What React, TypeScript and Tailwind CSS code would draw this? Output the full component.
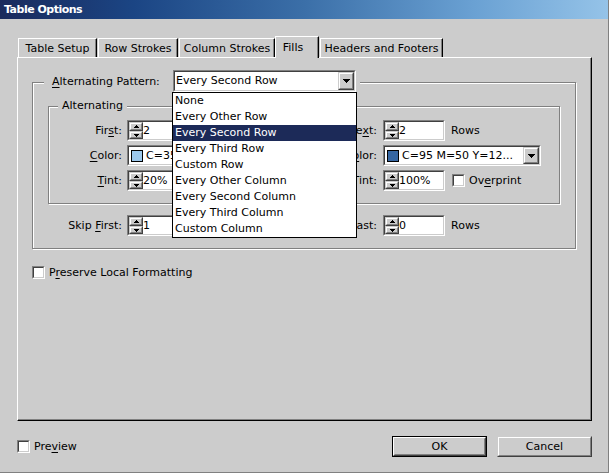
import React from "react";

type C = { className?: string; innerClass?: string; children?: React.ReactNode };

const Sunken = ({ className = "", innerClass = "", children }: C) => (
  <div className={`border border-t-[#808080] border-l-[#808080] border-b-white border-r-white ${className}`}>
    <div className={`h-full w-full border border-t-[#404040] border-l-[#404040] border-b-[#cccccc] border-r-[#cccccc] bg-white ${innerClass}`}>
      {children}
    </div>
  </div>
);

const Raised = ({ className = "", children }: C) => (
  <div className={`border border-t-[#cccccc] border-l-[#cccccc] border-b-[#404040] border-r-[#404040] bg-[#cccccc] ${className}`}>
    <div className="h-full w-full border border-t-white border-l-white border-b-[#808080] border-r-[#808080] flex items-center justify-center">
      {children}
    </div>
  </div>
);

const DownArrow = () => (
  <svg width="7" height="4" shapeRendering="crispEdges">
    <rect x="0" y="0" width="7" height="1" fill="#000" />
    <rect x="1" y="1" width="5" height="1" fill="#000" />
    <rect x="2" y="2" width="3" height="1" fill="#000" />
    <rect x="3" y="3" width="1" height="1" fill="#000" />
  </svg>
);

const SpinUp = () => (
  <svg width="5" height="3" shapeRendering="crispEdges">
    <rect x="2" y="0" width="1" height="1" fill="#000" />
    <rect x="1" y="1" width="3" height="1" fill="#000" />
    <rect x="0" y="2" width="5" height="1" fill="#000" />
  </svg>
);

const SpinDown = () => (
  <svg width="5" height="3" shapeRendering="crispEdges">
    <rect x="0" y="0" width="5" height="1" fill="#000" />
    <rect x="1" y="1" width="3" height="1" fill="#000" />
    <rect x="2" y="2" width="1" height="1" fill="#000" />
  </svg>
);

const U = ({ children }: { children: React.ReactNode }) => (
  <span className="underline decoration-1 underline-offset-2">{children}</span>
);

const Check = () => <Sunken className="w-[13px] h-[13px] shrink-0" />;

const SpinField = ({ value }: { value: string }) => (
  <Sunken className="w-[62px] h-[21px] shrink-0" innerClass="flex">
    <div className="flex flex-col w-[14px]">
      <Raised className="h-[9px] w-[14px]">
        <SpinUp />
      </Raised>
      <Raised className="h-[8px] w-[14px]">
        <SpinDown />
      </Raised>
    </div>
    <div className="leading-[17px]">{value}</div>
  </Sunken>
);

const ColorCombo = ({ swatch, text }: { swatch: string; text: string }) => (
  <Sunken className="w-[158px] h-[21px] shrink-0" innerClass="flex items-center">
    <div className={`ml-[2px] w-[12px] h-[12px] border border-black shrink-0 ${swatch}`} />
    <div className="ml-[3px] flex-1 leading-[17px] whitespace-nowrap overflow-hidden">{text}</div>
    <Raised className="w-[16px] h-[17px] shrink-0">
      <DownArrow />
    </Raised>
  </Sunken>
);

const Row = ({
  l1,
  c1,
  l2,
  c2,
}: {
  l1: React.ReactNode;
  c1: React.ReactNode;
  l2: React.ReactNode;
  c2: React.ReactNode;
}) => (
  <div className="flex items-center h-[21px]">
    <div className="w-[73px] text-right whitespace-nowrap">{l1}</div>
    <div className="ml-[5px] w-[187px] flex items-center">{c1}</div>
    <div className="w-[63px] text-right whitespace-nowrap">{l2}</div>
    <div className="ml-[6px] flex items-center">{c2}</div>
  </div>
);

const Tab = ({ w, ml, sel, children }: { w: string; ml: string; sel?: boolean; children: React.ReactNode }) => (
  <div
    className={`${w} ${ml} ${
      sel ? "h-[22px] -mb-[1px] relative z-10 pr-[8px]" : "h-[19px]"
    } bg-[#cccccc] border-t border-l border-r border-t-white border-l-white border-r-black shadow-[inset_-1px_0_0_#808080] flex items-center justify-center whitespace-nowrap`}
  >
    {children}
  </div>
);

const items = [
  "None",
  "Every Other Row",
  "Every Second Row",
  "Every Third Row",
  "Custom Row",
  "Every Other Column",
  "Every Second Column",
  "Every Third Column",
  "Custom Column",
];

export default function App() {
  return (
    <div className="relative w-[609px] h-[473px] overflow-hidden bg-[#cccccc] border-r border-b border-[#808080] font-['DejaVu_Sans',sans-serif] text-[11px] leading-[13px] text-black">
      <div className="h-[19px] flex items-center pl-[4px] bg-[linear-gradient(to_right,#1a2a5c_0%,#1b4584_22%,#3b6fa8_50%,#6aa1d3_78%,#95c3e8_100%)] text-white font-bold tracking-[-0.5px]">
        Table Options
      </div>
      <div className="pt-[17px] pl-[17px] pr-[16px]">
        <div className="flex items-end h-[21px]">
          <Tab w="w-[79px]" ml="ml-[1px]">Table Setup</Tab>
          <Tab w="w-[80px]" ml="ml-[1px]">Row Strokes</Tab>
          <Tab w="w-[96px]" ml="ml-[1px]">Column Strokes</Tab>
          <Tab w="w-[44px]" ml="ml-0" sel>
            Fills
          </Tab>
          <Tab w="w-[123px]" ml="ml-[1px]">Headers and Footers</Tab>
        </div>
        <div className="w-[575px] h-[364px] border border-t-white border-l-white border-b-black border-r-black shadow-[inset_-1px_-1px_0_#808080]">
          <div className="ml-[14px] mt-[24px] w-[544px] h-[167px] border border-[#808080] shadow-[inset_1px_1px_0_#fff,1px_1px_0_#fff]">
            <div className="relative z-10 -mt-[13px] ml-[11px] pl-[8px] pr-[4px] h-[22px] w-fit flex items-center bg-[#cccccc]">
              <span className="w-[121px] whitespace-nowrap">
                <U>A</U>lternating Pattern:
              </span>
              <div className="relative">
                <Sunken className="w-[183px] h-[22px]" innerClass="flex items-center">
                  <div className="flex-1 pl-[1px] leading-[18px] whitespace-nowrap">Every Second Row</div>
                  <Raised className="w-[16px] h-[18px]">
                    <DownArrow />
                  </Raised>
                </Sunken>
                <div className="absolute left-[-1px] top-full w-[185px] border border-black bg-white z-20">
                  {items.map((t, i) => (
                    <div
                      key={t}
                      className={`h-[16px] leading-[16px] pl-[2px] whitespace-nowrap ${
                        i === 2 ? "bg-[#1c2a58] text-white" : ""
                      }`}
                    >
                      {t}
                    </div>
                  ))}
                </div>
              </div>
            </div>

            <div className="ml-[15px] mt-[14px] w-[512px] h-[98px] border border-[#808080] shadow-[inset_1px_1px_0_#fff,1px_1px_0_#fff]">
              <div className="-mt-[8px] ml-[9px] px-[4px] h-[14px] leading-[14px] w-fit bg-[#cccccc]">Alternating</div>
              <div className="mt-[7px] flex flex-col gap-[4px]">
                <Row
                  l1={
                    <>
                      Fir<U>s</U>t:
                    </>
                  }
                  c1={<SpinField value="2" />}
                  l2={
                    <>
                      Ne<U>x</U>t:
                    </>
                  }
                  c2={
                    <>
                      <SpinField value="2" />
                      <span className="ml-[6px]">Rows</span>
                    </>
                  }
                />
                <Row
                  l1={
                    <>
                      <U>C</U>olor:
                    </>
                  }
                  c1={<ColorCombo swatch="bg-[#9cc8ec]" text="C=35" />}
                  l2={
                    <>
                      C<U>o</U>lor:
                    </>
                  }
                  c2={<ColorCombo swatch="bg-[#3566a2]" text="C=95 M=50 Y=12..." />}
                />
                <Row
                  l1={
                    <>
                      <U>T</U>int:
                    </>
                  }
                  c1={<SpinField value="20%" />}
                  l2={<>Tint:</>}
                  c2={
                    <>
                      <SpinField value="100%" />
                      <div className="ml-[7px]">
                        <Check />
                      </div>
                      <span className="ml-[4px]">
                        Ov<U>e</U>rprint
                      </span>
                    </>
                  }
                />
              </div>
            </div>

            <div className="mt-[11px] pl-[16px]">
              <Row
                l1={
                  <>
                    Skip <U>F</U>irst:
                  </>
                }
                c1={<SpinField value="1" />}
                l2={
                  <>
                    Skip <U>L</U>ast:
                  </>
                }
                c2={
                  <>
                    <SpinField value="0" />
                    <span className="ml-[6px]">Rows</span>
                  </>
                }
              />
            </div>
          </div>

          <div className="mt-[17px] ml-[14px] flex items-center h-[13px]">
            <Check />
            <span className="ml-[4px]">
              P<U>r</U>eserve Local Formatting
            </span>
          </div>
        </div>

        <div className="mt-[15px] h-[21px] flex items-center">
          <Check />
          <span className="ml-[4px]">
            Pre<U>v</U>iew
          </span>
          <div className="ml-auto w-[95px] h-[21px] border border-black">
            <div className="h-full w-full border border-t-white border-l-white border-b-[#404040] border-r-[#404040]">
              <div className="h-full w-full border border-t-[#cccccc] border-l-[#cccccc] border-b-[#808080] border-r-[#808080] flex items-center justify-center">
                OK
              </div>
            </div>
          </div>
          <Raised className="ml-[10px] w-[95px] h-[21px]">Cancel</Raised>
        </div>
      </div>
    </div>
  );
}
